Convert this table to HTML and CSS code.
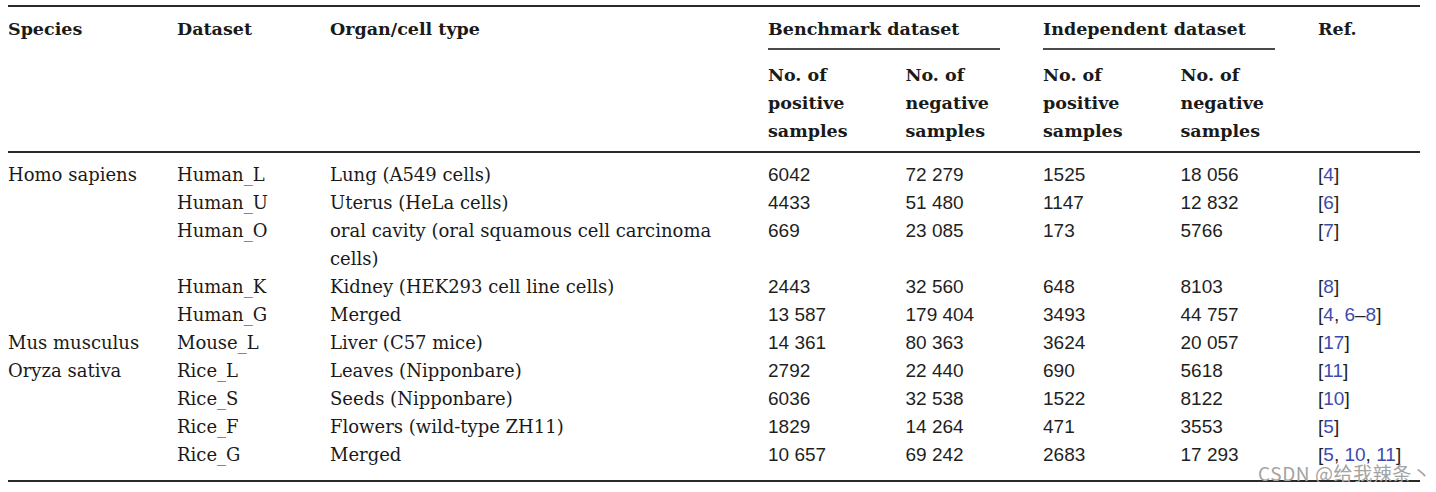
FILE: index.html
```html
<!DOCTYPE html>
<html lang="en">
<head>
<meta charset="utf-8">
<title>Datasets</title>
<link rel="stylesheet" href="styles.css">
</head>
<body>
<div class="page">
<table class="data">
  <colgroup>
    <col class="c-species"><col class="c-dataset"><col class="c-organ">
    <col class="c-num"><col class="c-num"><col class="c-num"><col class="c-num"><col class="c-ref">
  </colgroup>
  <thead>
    <tr class="h1">
      <th rowspan="2">Species</th>
      <th rowspan="2">Dataset</th>
      <th rowspan="2">Organ/cell type</th>
      <th colspan="2" class="group"><span class="group-label">Benchmark dataset</span></th>
      <th colspan="2" class="group"><span class="group-label">Independent dataset</span></th>
      <th rowspan="2">Ref.</th>
    </tr>
    <tr class="h2">
      <th>No. of<br>positive<br>samples</th>
      <th>No. of<br>negative<br>samples</th>
      <th>No. of<br>positive<br>samples</th>
      <th>No. of<br>negative<br>samples</th>
    </tr>
  </thead>
  <tbody>
    <tr class="first"><td>Homo sapiens</td><td>Human_L</td><td>Lung (A549 cells)</td><td class="n">6042</td><td class="n">72 279</td><td class="n">1525</td><td class="n">18 056</td><td class="r">[<a>4</a>]</td></tr>
    <tr><td></td><td>Human_U</td><td>Uterus (HeLa cells)</td><td class="n">4433</td><td class="n">51 480</td><td class="n">1147</td><td class="n">12 832</td><td class="r">[<a>6</a>]</td></tr>
    <tr><td></td><td>Human_O</td><td><span class="wrap">oral cavity (oral squamous cell carcinoma cells)</span></td><td class="n">669</td><td class="n">23 085</td><td class="n">173</td><td class="n">5766</td><td class="r">[<a>7</a>]</td></tr>
    <tr><td></td><td>Human_K</td><td>Kidney (HEK293 cell line cells)</td><td class="n">2443</td><td class="n">32 560</td><td class="n">648</td><td class="n">8103</td><td class="r">[<a>8</a>]</td></tr>
    <tr><td></td><td>Human_G</td><td>Merged</td><td class="n">13 587</td><td class="n">179 404</td><td class="n">3493</td><td class="n">44 757</td><td class="r">[<a>4</a>, <a>6</a>–<a>8</a>]</td></tr>
    <tr><td>Mus musculus</td><td>Mouse_L</td><td>Liver (C57 mice)</td><td class="n">14 361</td><td class="n">80 363</td><td class="n">3624</td><td class="n">20 057</td><td class="r">[<a>17</a>]</td></tr>
    <tr><td>Oryza sativa</td><td>Rice_L</td><td>Leaves (Nipponbare)</td><td class="n">2792</td><td class="n">22 440</td><td class="n">690</td><td class="n">5618</td><td class="r">[<a>11</a>]</td></tr>
    <tr><td></td><td>Rice_S</td><td>Seeds (Nipponbare)</td><td class="n">6036</td><td class="n">32 538</td><td class="n">1522</td><td class="n">8122</td><td class="r">[<a>10</a>]</td></tr>
    <tr><td></td><td>Rice_F</td><td>Flowers (wild-type ZH11)</td><td class="n">1829</td><td class="n">14 264</td><td class="n">471</td><td class="n">3553</td><td class="r">[<a>5</a>]</td></tr>
    <tr class="last"><td></td><td>Rice_G</td><td>Merged</td><td class="n">10 657</td><td class="n">69 242</td><td class="n">2683</td><td class="n">17 293</td><td class="r">[<a>5</a>, <a>10</a>, <a>11</a>]</td></tr>
  </tbody>
</table>
<div class="watermark">CSDN @给我辣条丶</div>
</div>
</body>
</html>
```
FILE: styles.css
```css
html, body {
  margin: 0;
  padding: 0;
  background: #ffffff;
}
body {
  padding: 5px 16px 0 8px;
  font-family: "DejaVu Serif", serif;
  font-size: 18px;
  color: #1a1a1a;
}
.page {
  position: relative;
  width: 1412px;
}
.data {
  border-collapse: collapse;
  table-layout: fixed;
  width: 1412px;
  border-top: 2px solid #2a2a2a;
  border-bottom: 2px solid #2a2a2a;
}
.c-species { width: 169px; }
.c-dataset { width: 153px; }
.c-organ { width: 438px; }
.c-num { width: 137.5px; }
.c-ref { width: 102px; }

th, td {
  padding: 0;
  text-align: left;
  vertical-align: top;
  line-height: 28px;
  font-weight: normal;
}
th {
  font-weight: bold;
  font-size: 17.5px;
}
.h1 th {
  padding-top: 8px;
}
.h1 th.group {
  padding-right: 43px;
}
.group-label {
  display: block;
  padding-bottom: 5px;
  border-bottom: 2px solid #4a4a4a;
}
.h2 th {
  padding-top: 11px;
  padding-bottom: 6px;
}
thead {
  border-bottom: 2px solid #2a2a2a;
}
tbody tr.first td { padding-top: 8px; }
tbody tr.last td { padding-bottom: 11px; }
.wrap {
  display: block;
  padding-right: 20px;
}
td.n, td.r {
  font-family: "Liberation Sans", Arial, sans-serif;
  font-size: 19px;
  color: #1f1f1f;
}
td.r a {
  color: #3d4bb0;
}
.watermark {
  position: absolute;
  left: 1250px;
  bottom: -1px;
  font-family: "Noto Sans CJK SC", "Noto Sans", sans-serif;
  font-size: 19px;
  letter-spacing: 0.6px;
  color: #a3a3a3;
  line-height: 20px;
  white-space: nowrap;
}
```
